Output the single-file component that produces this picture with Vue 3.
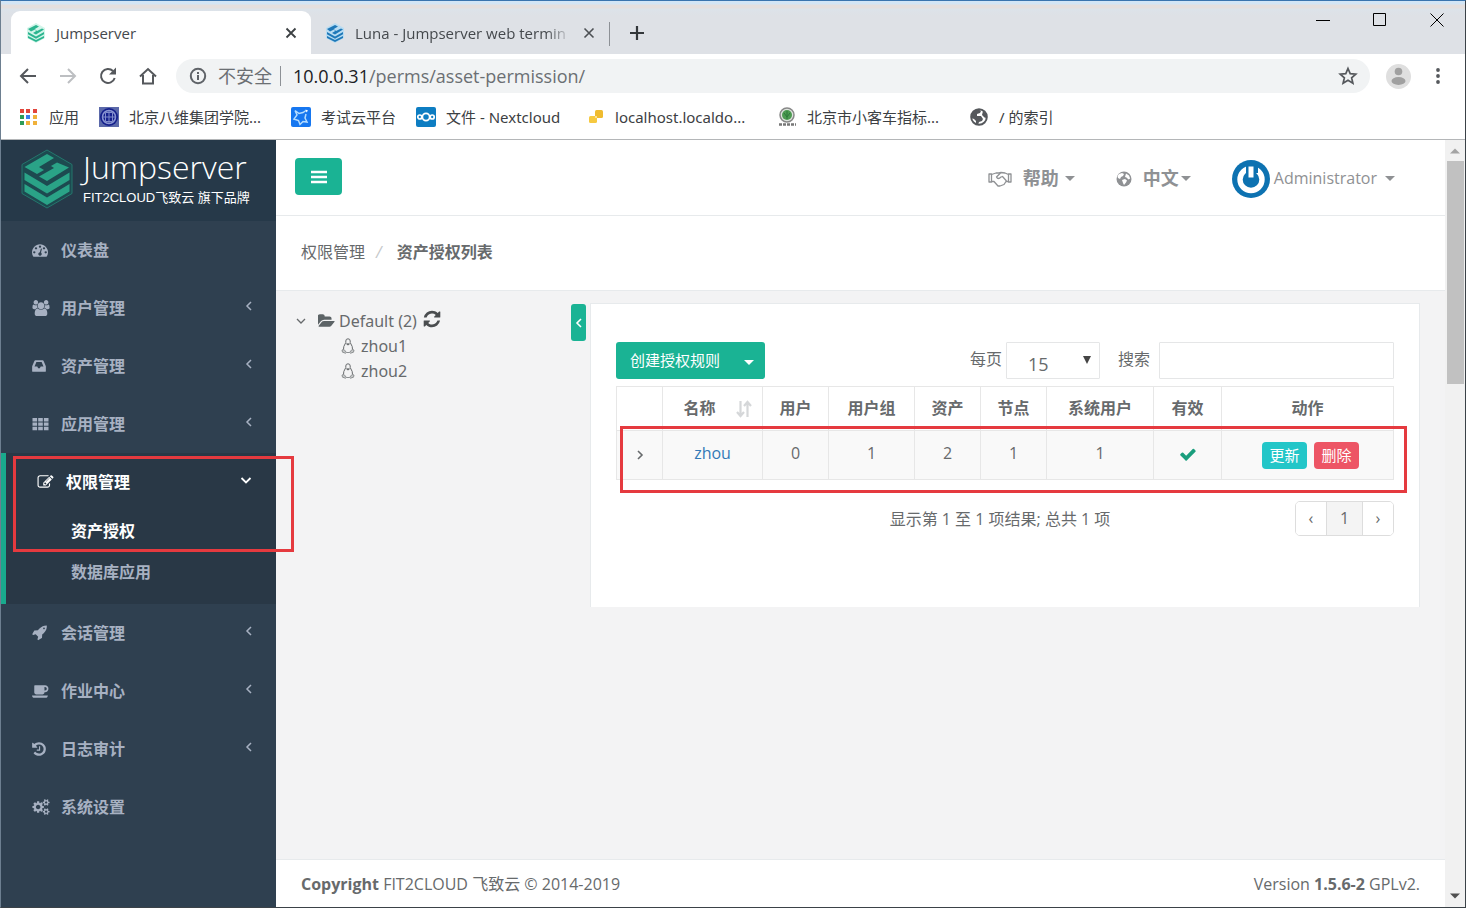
<script setup>
import { ref } from 'vue'

const cogTop = 'M1920 314v140q0 16-149 31-12 27-30 52 51 113 51 138 0 4-4 7-122 71-124 71-8 0-46-47t-52-68q-20 2-30 2t-30-2q-14 21-52 68t-46 47q-2 0-124-71-4-3-4-7 0-25 51-138-18-25-30-52-149-15-149-31v-140q0-16 149-31 13-29 30-52-51-113-51-138 0-4 4-7 4-2 35-20t59-34 30-16q8 0 46 46.5t52 67.5q20-2 30-2t30 2q51-71 92-112l6-2q4 0 124 70 4 3 4 7 0 25-51 138 17 23 30 52 149 15 149 31z'
const cogBottom = cogTop.replace('M1920 314', 'M1920 1338')

const icons = {
  dashboard: { box: '0 0 1792 1792', w: 16, d: 'M384 1152q0-53-37.5-90.5t-90.5-37.5-90.5 37.5-37.5 90.5 37.5 90.5 90.5 37.5 90.5-37.5 37.5-90.5zm192-448q0-53-37.5-90.5t-90.5-37.5-90.5 37.5-37.5 90.5 37.5 90.5 90.5 37.5 90.5-37.5 37.5-90.5zm428 481l101-382q6-26-7.5-48.5t-38.5-29.5-48 6.5-30 39.5l-101 382q-60 5-107 43.5t-63 98.5q-20 77 20 146t117 89 146-20 89-117q16-60-6-117t-72-91zm660-33q0-53-37.5-90.5t-90.5-37.5-90.5 37.5-37.5 90.5 37.5 90.5 90.5 37.5 90.5-37.5 37.5-90.5zm-640-640q0-53-37.5-90.5t-90.5-37.5-90.5 37.5-37.5 90.5 37.5 90.5 90.5 37.5 90.5-37.5 37.5-90.5zm448 192q0-53-37.5-90.5t-90.5-37.5-90.5 37.5-37.5 90.5 37.5 90.5 90.5 37.5 90.5-37.5 37.5-90.5zm320 448q0 261-141 483-19 29-54 29h-1402q-35 0-54-29-141-221-141-483 0-182 71-348t191-286 286-191 348-71 348 71 286 191 191 286 71 348z' },
  users: { box: '0 0 1920 1792', w: 18, d: 'M593 896q-162 5-265 128h-134q-82 0-138-40.5t-56-118.5q0-353 124-353 6 0 43.5 21t97.5 42.5 119 21.5q67 0 133-23-5 37-5 66 0 139 81 256zm1071 637q0 120-73 189.5t-194 69.5h-874q-121 0-194-69.5t-73-189.5q0-53 3.5-103.5t14-109 26.5-108.5 43-97.5 62-81 85.5-53.5 111.5-20q10 0 43 21.5t73 48 107 48 135 21.5 135-21.5 107-48 73-48 43-21.5q61 0 111.5 20t85.5 53.5 62 81 43 97.5 26.5 108.5 14 109 3.5 103.5zm-1024-1277q0 106-75 181t-181 75-181-75-75-181 75-181 181-75 181 75 75 181zm704 384q0 159-112.5 271.5t-271.5 112.5-271.5-112.5-112.5-271.5 112.5-271.5 271.5-112.5 271.5 112.5 112.5 271.5zm576 225q0 78-56 118.5t-138 40.5h-134q-103-123-265-128 81-117 81-256 0-29-5-66 66 23 133 23 59 0 119-21.5t97.5-42.5 43.5-21q124 0 124 353zm-128-609q0 106-75 181t-181 75-181-75-75-181 75-181 181-75 181 75 75 181z' },
  inbox: { box: '128 0 1536 1792', w: 14, d: 'M1088 960h316q-1-3-2.5-8.5t-2.5-7.5l-212-496h-582l-212 496q-1 3-2.5 8.5t-2.5 7.5h316l95 192h194zm576 30v482q0 26-19 45t-45 19h-1408q-26 0-45-19t-19-45v-482q0-62 25-123l238-552q10-25 36.5-42t52.5-17h832q26 0 52.5 17t36.5 42l238 552q25 61 25 123z' },
  grid: { box: '0 0 16 16', w: 17, d: 'M0 2h4.6v3.4H0zM5.7 2h4.6v3.4H5.7zM11.4 2H16v3.4h-4.6zM0 6.4h4.6v3.4H0zM5.7 6.4h4.6v3.4H5.7zM11.4 6.4H16v3.4h-4.6zM0 10.8h4.6v3.4H0zM5.7 10.8h4.6v3.4H5.7zM11.4 10.8H16v3.4h-4.6z' },
  edit: { box: '0 0 1792 1792', w: 17, d: 'M888 1184l116-116-152-152-116 116v56h96v96h56zm440-720q-16-16-33 1l-350 350q-17 17-1 33t33-1l350-350q17-17 1-33zm80 594v190q0 119-84.5 203.5t-203.5 84.5h-832q-119 0-203.5-84.5t-84.5-203.5v-832q0-119 84.5-203.5t203.5-84.5h832q63 0 117 25 15 7 18 23 3 17-9 29l-49 49q-14 14-32 8-23-6-45-6h-832q-66 0-113 47t-47 113v832q0 66 47 113t113 47h832q66 0 113-47t47-113v-126q0-13 9-22l64-64q15-15 35-7t20 29zm-96-738l288 288-672 672h-288v-288zm444 132l-92 92-288-288 92-92q28-28 68-28t68 28l152 152q28 28 28 68t-28 68z' },
  rocket: { box: '64 64 1664 1792', w: 16, d: 'M1440 448q0-40-28-68t-68-28-68 28-28 68 28 68 68 28 68-28 28-68zm224-288q0 249-75.5 430.5t-253.5 360.5q-81 80-195 176l-20 379q-2 16-16 26l-384 224q-7 4-16 4-12 0-23-9l-64-64q-13-14-8-32l85-276-281-281-276 85q-3 1-9 1-14 0-23-9l-64-64q-17-19-5-39l224-384q10-14 26-16l379-20q96-114 176-195 188-187 358-258t431-71q14 0 24 9.5t10 22.5z' },
  coffee: { box: '0 0 1920 1792', w: 17, d: 'M1664 640q0-80-56-136t-136-56h-64v384h64q80 0 136-56t56-136zm-1664 768h1792q0 106-75 181t-181 75h-1280q-106 0-181-75t-75-181zm1856-768q0 159-112.5 271.5t-271.5 112.5h-64v32q0 92-66 158t-158 66h-704q-92 0-158-66t-66-158v-736q0-26 19-45t45-19h1152q159 0 271.5 112.5t112.5 271.5z' },
  history: { box: '128 0 1536 1792', w: 14, d: 'M1664 896q0 156-61 298t-164 245-245 164-298 61q-172 0-327-72.5t-264-204.5q-7-10-6.5-22.5t8.5-20.5l137-138q10-9 25-9 16 2 23 12 73 95 179 147t225 52q104 0 198.5-40.5t163.5-109.5 109.5-163.5 40.5-198.5-40.5-198.5-109.5-163.5-163.5-109.5-198.5-40.5q-98 0-188 35.5t-160 101.5l137 138q31 30 14 69-17 40-59 40h-448q-26 0-45-19t-19-45v-448q0-42 40-59 39-17 69 14l130 129q107-101 244.5-156.5t284.5-55.5q156 0 298 61t245 164 164 245 61 298zm-640-288v448q0 14-9 23t-23 9h-320q-14 0-23-9t-9-23v-64q0-14 9-23t23-9h224v-352q0-14 9-23t23-9h64q14 0 23 9t9 23z' },
  cogs: { box: '0 0 1920 1792', w: 18, d: 'M896 896q0-106-75-181t-181-75-181 75-75 181 75 181 181 75 181-75 75-181zm768 512q0-52-38-90t-90-38-90 38-38 90q0 53 37.5 90.5t90.5 37.5 90.5-37.5 37.5-90.5zm0-1024q0-52-38-90t-90-38-90 38-38 90q0 53 37.5 90.5t90.5 37.5 90.5-37.5 37.5-90.5zm-384 421v185q0 10-7 19.5t-16 10.5l-155 24q-11 35-32 76 34 48 90 115 7 11 7 20 0 12-7 19-23 30-82.5 89.5t-78.5 59.5q-11 0-21-7l-115-90q-37 19-77 31-11 108-23 155-7 24-30 24h-186q-11 0-20-7.5t-10-17.5l-23-153q-34-10-75-31l-118 89q-7 7-20 7-11 0-21-8-144-133-144-160 0-9 7-19 10-14 41-53t47-61q-23-44-35-82l-152-24q-10-1-17-9.5t-7-19.5v-185q0-10 7-19.5t16-10.5l155-24q11-35 32-76-34-48-90-115-7-11-7-20 0-12 7-20 22-30 82-89t79-59q11 0 21 7l115 90q34-18 77-32 11-108 23-154 7-24 30-24h186q11 0 20 7.5t10 17.5l23 153q34 10 75 31l118-89q8-7 20-7 11 0 21 8 144 133 144 160 0 8-7 19-12 16-42 54t-45 60q23 48 34 82l152 23q10 2 17 10.5t7 19.5z' + cogTop + cogBottom },
}

const menuTop = [
  { label: '仪表盘', icon: 'dashboard', arrow: false },
  { label: '用户管理', icon: 'users', arrow: true },
  { label: '资产管理', icon: 'inbox', arrow: true },
  { label: '应用管理', icon: 'grid', arrow: true },
  { label: '权限管理', icon: 'edit', active: true, children: ['资产授权', '数据库应用'] },
  { label: '会话管理', icon: 'rocket', arrow: true },
  { label: '作业中心', icon: 'coffee', arrow: true },
  { label: '日志审计', icon: 'history', arrow: true },
  { label: '系统设置', icon: 'cogs', arrow: false },
]

const columns = ['用户', '用户组', '资产', '节点', '系统用户', '有效', '动作']
const rows = [{ name: 'zhou', counts: [0, 1, 2, 1, 1] }]
const address = ref('')
const search = ref('')
const pageSize = ref('15')
</script>

<template>
  <div class="window">
    <header class="tabstrip">
      <div class="tab active">
        <svg class="fav" viewBox="0 0 20 20">
          <path d="M10 0l9 5v10l-9 5-9-5V5z" fill="#d3f5ea" />
          <path d="M2 6l8-4 3 1.500-5 3 3 1.500 5-2.500 2 1-8 5-3-1.500 4-2.500-2-1-4 2z" fill="#2bb58f" />
          <path d="M2 9l8 4.500L18 9v2.200l-8 4.500-8-4.500zM2 13l8 4 8-4v2l-8 4-8-4z" fill="#2bb58f" />
        </svg>
        <span class="tab-title">Jumpserver</span>
        <button class="plain" aria-label="关闭标签页">
          <svg width="14" height="14" viewBox="0 0 14 14"><path d="M2.500 2.500l9 9M11.500 2.500l-9 9" stroke="#3c4043" stroke-width="1.800" /></svg>
        </button>
      </div>
      <div class="tab">
        <svg class="fav" viewBox="0 0 20 20">
          <path d="M10 0l9 5v10l-9 5-9-5V5z" fill="#b9dcf2" />
          <path d="M2 6l8-4 3 1.500-5 3 3 1.500 5-2.500 2 1-8 5-3-1.500 4-2.500-2-1-4 2z" fill="#1f78b8" />
          <path d="M2 9l8 4.500L18 9v2.200l-8 4.500-8-4.500zM2 13l8 4 8-4v2l-8 4-8-4z" fill="#1f78b8" />
        </svg>
        <span class="tab-title fade">Luna - Jumpserver web termin</span>
        <button class="plain" aria-label="关闭标签页">
          <svg width="14" height="14" viewBox="0 0 14 14"><path d="M2.500 2.500l9 9M11.500 2.500l-9 9" stroke="#4c5054" stroke-width="1.600" /></svg>
        </button>
      </div>
      <span class="tab-sep"></span>
      <button class="plain new-tab" aria-label="新标签页">
        <svg width="16" height="16" viewBox="0 0 16 16"><path d="M8 1v14M1 8h14" stroke="#33373a" stroke-width="2.200" /></svg>
      </button>
      <div class="win-controls">
        <button class="plain" aria-label="最小化"><svg width="14" height="14" viewBox="0 0 14 14"><path d="M0 7.500h14" stroke="#000" /></svg></button>
        <button class="plain" aria-label="最大化"><svg width="14" height="14" viewBox="0 0 14 14"><path d="M.5.5h12v12H.5z" stroke="#000" fill="none" /></svg></button>
        <button class="plain" aria-label="关闭"><svg width="14" height="14" viewBox="0 0 14 14"><path d="M.5.5l13 13M13.500.5l-13 13" stroke="#000" /></svg></button>
      </div>
    </header>

    <div class="toolbar">
      <button class="plain nav" aria-label="后退"><svg width="20" height="20" viewBox="0 0 20 20" fill="none" stroke="#55585c" stroke-width="2"><path d="M18 10H3M10 3l-7 7 7 7" /></svg></button>
      <button class="plain nav" aria-label="前进"><svg width="20" height="20" viewBox="0 0 20 20" fill="none" stroke="#bdbfc2" stroke-width="2"><path d="M2 10h15M10 3l7 7-7 7" /></svg></button>
      <button class="plain nav" aria-label="重新加载"><svg width="20" height="20" viewBox="0 0 20 20" fill="none" stroke="#55585c" stroke-width="2"><path d="M16.700 12A7 7 0 1 1 15 5" /><path d="M18 1.500v7h-7z" fill="#55585c" stroke="none" /></svg></button>
      <button class="plain nav" aria-label="主页"><svg width="20" height="20" viewBox="0 0 20 20" fill="none" stroke="#55585c" stroke-width="2"><path d="M2 10.500L10 3l8 7.500M5 9v8.500h10V9" /></svg></button>
      <div class="omnibox">
        <svg width="18" height="18" viewBox="0 0 18 18" fill="none" stroke="#5f6368" stroke-width="2"><circle cx="9" cy="9" r="7.200" /><path d="M9 8v5M9 5v2" /></svg>
        <span class="insecure">不安全</span>
        <span class="omni-sep"></span>
        <label class="url">
          <span class="host">10.0.0.31</span><span>/perms/asset-permission/</span>
          <input v-model="address" aria-label="地址栏" />
        </label>
        <button class="plain" aria-label="收藏"><svg width="20" height="20" viewBox="0 0 20 20"><path d="M10 2.500l2.200 5.100 5.600.5-4.200 3.700 1.300 5.400-4.900-2.900-4.900 2.900 1.300-5.400L2.200 8.100l5.600-.5z" fill="none" stroke="#55585c" stroke-width="1.700" /></svg></button>
      </div>
      <button class="plain profile" aria-label="用户"><svg width="25" height="25" viewBox="0 0 25 25"><circle cx="12.500" cy="12.500" r="12.500" fill="#dfdfdf" /><circle cx="12.500" cy="7.500" r="3.800" fill="#a0a0a0" /><ellipse cx="12.500" cy="17" rx="7" ry="3.900" fill="#a0a0a0" /></svg></button>
      <button class="plain" aria-label="菜单"><svg width="18" height="18" viewBox="0 0 18 18" fill="#55585c"><circle cx="9" cy="3" r="1.900" /><circle cx="9" cy="9" r="1.900" /><circle cx="9" cy="15" r="1.900" /></svg></button>
    </div>

    <nav class="bookmarks">
      <a href="#"><svg width="20" height="20" viewBox="0 0 20 20"><path d="M1 2h4v4H1zM7 2h4v4H7zM14 2h4v4h-4z" fill="#e2453b" /><path d="M1 8h4v4H1zM1 14h4v4H1z" fill="#2d9b57" /><path d="M7 8h4v4H7z" fill="#3b7ded" /><path d="M14 8h4v4h-4zM7 14h4v4H7zM14 14h4v4h-4z" fill="#f0b13a" /></svg><span>应用</span></a>
      <a href="#"><svg width="20" height="20" viewBox="0 0 20 20"><path d="M0 0h20v20H0z" fill="#5b69aa" /><circle cx="10" cy="10" r="9" fill="#15208c" /><circle cx="10" cy="10" r="6.500" fill="none" stroke="#8b96d2" stroke-width="1.500" /><path d="M6.500 5.500h7v9h-7zM10 4v12M3 10h14" fill="none" stroke="#7e8acb" /></svg><span class="wide">北京八维集团学院...</span></a>
      <a href="#"><svg width="20" height="20" viewBox="0 0 20 20"><rect width="20" height="20" rx="2" fill="#1677f0" /><path d="M4 3.500l4 3 4-1 3-2M15 7l-1 4 2 4-4-.5-3 3-1.500-4L3 12l3-4-2-4.500" fill="none" stroke="#b4dcff" stroke-width="1.500" /><path d="M14.500 2.500l2.500 1-1.500 2z" fill="#fff" /></svg><span>考试云平台</span></a>
      <a href="#"><svg width="20" height="20" viewBox="0 0 20 20"><rect width="20" height="20" rx="2" fill="#0d7dc2" /><g fill="none" stroke="#fff" stroke-width="1.700"><circle cx="10" cy="10" r="3.600" /><circle cx="3.800" cy="10" r="2" /><circle cx="16.200" cy="10" r="2" /></g></svg><span class="cloud">文件 - Nextcloud</span></a>
      <a href="#"><svg width="20" height="20" viewBox="0 0 20 20"><rect x="10" y="3" width="8" height="8" rx="1.500" fill="#efbb2f" /><rect x="4" y="9" width="8" height="7" rx="1.500" fill="#f6c940" /><path d="M10 9h2v2h-2z" fill="#fbe395" /></svg><span class="wide">localhost.localdo...</span></a>
      <a href="#"><svg width="20" height="20" viewBox="0 0 20 20"><circle cx="10" cy="8" r="7" fill="#dfe5df" stroke="#888" stroke-width="1.500" /><circle cx="10" cy="8" r="5" fill="#4d9b52" /><path d="M10 4v8M7 6l3 4 3-4" stroke="#2d7a3b" fill="none" /><path d="M2 17.500h17" stroke="#777" stroke-width="2.500" stroke-dasharray="3 1" /></svg><span class="wide">北京市小客车指标...</span></a>
      <a href="#"><svg width="20" height="20" viewBox="0 0 20 20"><circle cx="10" cy="10" r="7.800" fill="#fff" stroke="#55585c" stroke-width="2" /><path d="M3 7Q5 3 9 2l3 2-1 2-3 1v2h4l2 3-1 2-3 1-1 3-2-1v-3l-2-2-3-1zM14 4l3 3 .5 4-2-.5L13 8z" fill="#55585c" /></svg><span>/ 的索引</span></a>
    </nav>

    <div class="viewport">
      <aside class="sidebar">
        <div class="brand">
          <svg width="52" height="60" viewBox="0 0 52 60">
            <path d="M26 1l25 14.500v29L26 59 1 44.500v-29z" fill="#1d4a50" stroke="#24776d" />
            <path d="M3.500 18L26 5l7 4-15 9 5 3 13-7.500 12 5L26 32l-8-4.500 15-8.500-3-2-14 8z" fill="#2aa387" />
            <path d="M3.500 23.500L26 37l22.500-13.500v7.500L26 44.500 3.500 31zM3.500 35L26 48.500 48.500 35v7.500L26 56 3.500 42.500z" fill="#2aa387" />
          </svg>
          <div>
            <div class="brand-name">Jumpserver</div>
            <div class="brand-sub">FIT2CLOUD飞致云 旗下品牌</div>
          </div>
        </div>
        <ul class="menu">
          <li v-for="m in menuTop" :key="m.label" :class="{ active: m.active }">
            <a href="#" class="menu-link">
              <span class="menu-icon"><svg :width="icons[m.icon].w" height="16" :viewBox="icons[m.icon].box"><path :d="icons[m.icon].d" fill="currentColor" fill-rule="evenodd" /></svg></span>
              <span class="menu-label">{{ m.label }}</span>
              <svg v-if="m.arrow" class="chev" width="12" height="12" viewBox="0 0 12 12"><path d="M8 2L4 6l4 4" fill="none" stroke="currentColor" stroke-width="1.500" /></svg>
              <svg v-if="m.active" class="chev" width="12" height="12" viewBox="0 0 12 12"><path d="M1.500 4L6 8.500 10.500 4" fill="none" stroke="currentColor" stroke-width="1.800" /></svg>
            </a>
            <ul v-if="m.children" class="submenu">
              <li v-for="(c, i) in m.children" :key="c"><a href="#" :class="{ current: i === 0 }">{{ c }}</a></li>
            </ul>
            <span v-if="m.active" class="mark menu-mark"></span>
          </li>
        </ul>
      </aside>

      <main class="page">
        <header class="topbar">
          <button class="burger" aria-label="切换菜单"><svg width="16" height="14" viewBox="0 0 16 14"><path d="M0 2h16M0 7h16M0 12h16" stroke="#fff" stroke-width="2.600" /></svg></button>
          <div class="top-links">
            <a href="#" class="help">
              <svg width="24" height="18" viewBox="0 0 24 18" fill="none" stroke="currentColor" stroke-width="1.300" stroke-linejoin="round">
                <path d="M1 4h2.500v8H1zM20.500 4H23v8h-2.500z" /><path d="M3.500 4.500L8 3h3l2-.5 4 .5 3.500 1.500M3.500 11.500H6l4 4.500h2l4-1.500 2-3h2.500" /><path d="M12.500 3L8.500 7q1.500 3 4.500 0l1.500-.5 4 4.500" />
              </svg>
              <span>帮助</span><i class="caret"></i>
            </a>
            <a href="#" class="lang">
              <svg width="16" height="16" viewBox="0 0 16 16"><circle cx="8" cy="8" r="7.500" fill="currentColor" /><path d="M3 3l3-1 2 1-1 2-2 1-1 2-2-1-.5-2zM10 2.500l3 2 1.200 3-1.700 1-2-2-1.500-.5zM6 9l3-1 2 1.500-1 2-2 2.500-1-2z" fill="#fff" /></svg>
              <span>中文</span><i class="caret"></i>
            </a>
            <a href="#" class="user">
              <svg width="38" height="38" viewBox="0 0 38 38"><circle cx="19" cy="19" r="19" fill="#0d72b1" /><circle cx="19" cy="19.500" r="11" fill="none" stroke="#fff" stroke-width="5.400" /><path d="M14 4h12v9H14z" fill="#0d72b1" /><path d="M19 6.500v11" stroke="#fff" stroke-width="5" /></svg>
              <span>Administrator</span><i class="caret"></i>
            </a>
          </div>
        </header>

        <nav class="crumbs"><a href="#">权限管理</a><i>/</i><strong>资产授权列表</strong></nav>

        <section class="content">
          <div class="tree">
            <div class="node root">
              <svg class="twist" width="10" height="10" viewBox="0 0 10 10"><path d="M1 3l4 4 4-4" fill="none" stroke="#676a6c" stroke-width="1.300" /></svg>
              <svg width="17" height="16" viewBox="0 0 1815 1792"><path fill="#5c6366" d="M1815 952q0 31-31 66l-336 396q-43 51-120.500 86.500t-143.500 35.500h-1088q-34 0-60.500-13t-26.500-43q0-31 31-66l336-396q43-51 120.500-86.500t143.500-35.500h1088q34 0 60.500 13t26.500 43zm-343-344v160h-832q-94 0-197 47.500t-164 119.500l-337 396-5 6q0-4-.5-12.500t-.5-12.500v-960q0-92 66-158t158-66h320q92 0 158 66t66 158v32h544q92 0 158 66t66 158z" /></svg>
              <span>Default (2)</span>
              <button class="plain refresh" aria-label="刷新"><svg width="18" height="18" viewBox="64 64 1664 1664"><path fill="#4a4d4f" d="M1639 1056q0 5-1 7-64 268-268 434.500t-478 166.500q-146 0-282.500-55t-243.500-157l-129 129q-19 19-45 19t-45-19-19-45v-448q0-26 19-45t45-19h448q26 0 45 19t19 45-19 45l-137 137q71 66 161 102t187 36q134 0 250-65t186-179q11-17 53-117 8-23 30-23h192q13 0 22.500 9.500t9.500 22.500zm25-800v448q0 26-19 45t-45 19h-448q-26 0-45-19t-19-45 19-45l138-138q-148-137-349-137-134 0-250 65t-186 179q-11 17-53 117-8 23-30 23h-199q-13 0-22.500-9.500t-9.500-22.500v-7q65-268 270-434.500t480-166.500q146 0 284 55.500t245 156.500l130-129q19-19 45-19t45 19 19 45z" /></svg></button>
            </div>
            <div v-for="h in ['zhou1', 'zhou2']" :key="h" class="node leaf">
              <svg width="14" height="16" viewBox="0 0 14 16" fill="none" stroke="#676a6c"><path d="M4.800 4.500V3a2.200 2.200 0 0 1 4.400 0v1.500l2 4 .3 3M4.800 4.500l-2 4-.3 3" /><path d="M5.500 5.500L7 6.500l1.500-1" stroke-width="1.500" /><path d="M1 12l2-.5 2.500 3-1 .7-3-1zM13 12l-2-.5-2.500 3 1 .7 3-1zM5.500 14.500h3" stroke="#8d9092" fill="#c5c7c8" /></svg>
              <span>{{ h }}</span>
            </div>
          </div>

          <button class="collapse" aria-label="收起"><svg width="8" height="10" viewBox="0 0 8 10"><path d="M6 1L2 5l4 4" fill="none" stroke="#fff" stroke-width="1.600" /></svg></button>

          <div class="panel">
            <div class="controls">
              <button class="create"><span>创建授权规则</span><i class="caret"></i></button>
              <label class="size-label" for="size">每页</label>
              <div class="select-wrap">
                <select id="size" v-model="pageSize"><option>15</option></select>
                <svg width="8" height="8" viewBox="0 0 8 8"><path d="M0 0h8L4 8z" fill="#444" /></svg>
              </div>
              <label class="search-label" for="search">搜索</label>
              <input id="search" v-model="search" class="search" />
            </div>

            <div class="table-wrap">
              <table>
                <colgroup><col class="c46" /><col class="c100" /><col class="c66" /><col class="c86" /><col class="c66" /><col class="c66" /><col class="c107" /><col class="c68" /><col /></colgroup>
                <thead>
                  <tr>
                    <th></th>
                    <th class="sortable"><span>名称</span><svg width="16" height="18" viewBox="0 0 16 18"><path d="M4.500 1v14M1 12l3.500 4L8 12M11.500 17V3M8 6l3.500-4L15 6" fill="none" stroke="#d5d7d9" stroke-width="2.200" /></svg></th>
                    <th v-for="c in columns" :key="c">{{ c }}</th>
                  </tr>
                </thead>
                <tbody>
                  <tr v-for="r in rows" :key="r.name">
                    <td><svg width="8" height="10" viewBox="0 0 8 10"><path d="M2 1l4 4-4 4" fill="none" stroke="#676a6c" stroke-width="1.600" /></svg></td>
                    <td><a href="#">{{ r.name }}</a></td>
                    <td v-for="(n, i) in r.counts" :key="i">{{ n }}</td>
                    <td><svg width="16" height="14" viewBox="100 300 1600 1300"><path fill="#1a9e7d" d="M1671 566q0 40-28 68l-724 724-136 136q-28 28-68 28t-68-28l-136-136-362-362q-28-28-28-68t28-68l136-136q28-28 68-28t68 28l294 295 656-657q28-28 68-28t68 28l136 136q28 28 28 68z" /></svg></td>
                    <td class="actions"><button class="mini info">更新</button><button class="mini danger">删除</button></td>
                  </tr>
                </tbody>
              </table>
              <span class="mark row-mark"></span>
            </div>

            <div class="foot-row">
              <p>显示第 1 至 1 项结果; 总共 1 项</p>
              <div class="pager"><button>‹</button><button class="on">1</button><button>›</button></div>
            </div>
          </div>
        </section>

        <footer class="footer">
          <span><strong>Copyright</strong> FIT2CLOUD 飞致云 © 2014-2019</span>
          <span>Version <strong>1.5.6-2</strong> GPLv2.</span>
        </footer>
      </main>

      <div class="scrollbar">
        <svg width="10" height="6" viewBox="0 0 10 6"><path d="M0 5.500h10L5 .5z" fill="#a3a3a3" /></svg>
        <span class="thumb"></span>
        <svg width="10" height="6" viewBox="0 0 10 6"><path d="M0 .5h10L5 5.500z" fill="#505050" /></svg>
      </div>
    </div>
  </div>
</template>

<style>
body {
  margin: 0;
}
</style>

<style scoped>
* {
  box-sizing: border-box;
}
.window {
  display: flex;
  flex-direction: column;
  min-height: 100vh;
  border: 1px solid #3b4248;
  border-top-color: #3a74ae;
  border-left-color: #6d7f90;
  background: #fff;
  color: #676a6c;
  font: 16px/24px "Open Sans", "Noto Sans CJK SC", sans-serif;
}
a {
  color: inherit;
  text-decoration: none;
}
ul,
p {
  margin: 0;
  padding: 0;
  list-style: none;
}
button,
input,
select {
  font: inherit;
  color: inherit;
}
svg {
  flex: none;
  display: block;
}
.plain {
  display: flex;
  padding: 0;
  border: 0;
  background: none;
}

/* browser frame */
.tabstrip {
  display: flex;
  height: 53px;
  padding: 10px 0 0 10px;
  background: linear-gradient(#d3e5f5 0 3px, #e4dfde 4px 7px, #dce3ea 8px, #dee1e6 14px);
}
.tab {
  display: flex;
  align-items: center;
  width: 298px;
  padding: 0 13px 0 14px;
  color: #45494d;
  font-size: 15px;
}
.tab.active {
  width: 300px;
  padding-left: 15px;
  border-radius: 9px 9px 0 0;
  background: #fff;
}
.fav {
  width: 20px;
  height: 20px;
  margin-right: 10px;
}
.tab-title {
  flex: 1;
  white-space: nowrap;
}
.fade {
  margin-right: 10px;
  mask-image: linear-gradient(to right, #000 88%, transparent);
}
.tab-sep {
  width: 1px;
  height: 24px;
  margin-top: 11px;
  background: #8d9196;
}
.new-tab {
  margin: 14px 0 0 19px;
  height: 16px;
}
.win-controls {
  display: flex;
  gap: 43px;
  margin: 2px 21px 0 auto;
}
.win-controls .plain {
  height: 14px;
}
.toolbar {
  display: flex;
  align-items: center;
  height: 44px;
  padding: 0 18px 0 17px;
}
.nav {
  margin-right: 20px;
}
.omnibox {
  flex: 1;
  display: flex;
  align-items: center;
  height: 34px;
  padding: 0 12px 0 13px;
  margin: 0 16px 0 -2px;
  border-radius: 17px;
  background: #f1f3f4;
  color: #6b6f73;
  font-size: 18px;
}
.insecure {
  margin-left: 11px;
}
.omni-sep {
  width: 1px;
  height: 20px;
  margin: 0 12px 0 8px;
  background: #8d9196;
}
.url {
  flex: 1;
  display: flex;
}
.url input {
  flex: 1;
  min-width: 0;
  padding: 0;
  border: 0;
  background: none;
  outline: none;
}
.host {
  color: #202124;
}
.profile {
  margin-right: 18px;
}
.bookmarks {
  display: flex;
  align-items: center;
  gap: 20px;
  height: 42px;
  padding: 0 18px 4px;
  border-bottom: 1px solid #b4b6b8;
  color: #3c4043;
  font-family: "Noto Sans", "Noto Sans CJK SC", sans-serif;
  font-size: 15px;
}
.bookmarks a {
  display: flex;
  align-items: center;
  gap: 10px;
  white-space: nowrap;
}
.wide {
  width: 142px;
}
.cloud {
  width: 119px;
}

/* page */
.viewport {
  flex: 1;
  display: flex;
}
.sidebar {
  width: 275px;
  background: #2f4050;
  color: #a7b1c2;
}
.brand {
  display: flex;
  gap: 10px;
  height: 81px;
  padding: 9px 0 0 20px;
  background: #263949;
  color: #fff;
}
.brand-name {
  font-size: 32px;
  font-weight: 300;
  line-height: 36px;
}
.brand-sub {
  font: 13px/26px "Liberation Sans", "Noto Sans CJK SC", sans-serif;
  white-space: nowrap;
}
.menu {
  font-weight: 600;
}
.menu > li {
  position: relative;
}
.menu-link {
  display: flex;
  align-items: center;
  height: 58px;
  padding: 0 21px 0 31px;
}
.menu-icon {
  width: 29px;
}
.menu-label {
  flex: 1;
}
.chev {
  margin-bottom: 4px;
}
.active .menu-link {
  padding: 0 24px 0 31px;
}
.menu > .active {
  padding-bottom: 11px;
  border-left: 5px solid #19aa8d;
  background: #293846;
}
.active .menu-link,
.current {
  color: #fff;
}
.submenu a {
  display: block;
  padding-left: 65px;
  line-height: 41px;
}
.mark {
  position: absolute;
  border: 3px solid #e53a3f;
  pointer-events: none;
}
.menu-mark {
  z-index: 1;
  top: 3px;
  left: 7px;
  width: 281px;
  height: 96px;
}
.page {
  flex: 1;
  display: flex;
  flex-direction: column;
  min-width: 0;
  background: #f3f3f4;
}
.topbar {
  display: flex;
  align-items: center;
  justify-content: space-between;
  height: 76px;
  padding: 0 50px 2px 19px;
  border-bottom: 1px solid #e7eaec;
  background: #fff;
}
.burger {
  display: grid;
  place-items: center;
  width: 47px;
  height: 37px;
  border: 0;
  border-radius: 4px;
  background: #1ab394;
}
.top-links,
.top-links a {
  display: flex;
  align-items: center;
}
.top-links {
  gap: 41px;
  padding-top: 4px;
  color: #8f9194;
}
.help,
.lang {
  font-size: 18px;
  font-weight: 700;
}
.top-links span {
  padding-bottom: 2px;
}
.help span {
  margin: 0 6px 0 11px;
}
.lang span {
  margin: 0 2px 0 11px;
}
.user span {
  margin: 0 8px 0 4px;
}
.caret {
  border: 5px solid transparent;
  border-top-color: currentColor;
  border-bottom: 0;
}
.crumbs {
  display: flex;
  align-items: center;
  height: 75px;
  padding: 0 25px 2px;
  border-bottom: 1px solid #e7eaec;
  background: #fff;
}
.crumbs i {
  margin: 0 15px 0 11px;
  color: #c5c8ca;
}
.content {
  flex: 1;
  display: flex;
  align-items: flex-start;
  padding: 12px 25px 0 19px;
}
.tree {
  flex: none;
  width: 276px;
  padding: 5px 0 0 1px;
  font-family: "Noto Sans", sans-serif;
}
.node {
  display: flex;
  align-items: center;
  height: 25px;
}
.root svg + svg {
  margin: 0 4px 0 12px;
}
.refresh {
  margin: 0 0 4px 6px;
}
.leaf {
  padding-left: 45px;
}
.leaf span {
  margin-left: 6px;
}
.collapse {
  display: grid;
  place-items: center;
  flex: none;
  width: 15px;
  height: 37px;
  margin-top: 1px;
  margin-right: 4px;
  padding: 0;
  border: 0;
  border-radius: 3px;
  background: #1ab394;
}
.panel {
  flex: 1;
  min-height: 304px;
  min-width: 0;
  padding: 38px 25px 60px;
  border: 1px solid #e7eaec;
  border-bottom: 0;
  background: #fff;
}
.controls {
  display: flex;
  margin-bottom: 7px;
}
.create {
  display: flex;
  align-items: center;
  gap: 24px;
  height: 37px;
  padding: 0 11px 2px 14px;
  border: 0;
  border-radius: 3px;
  background: #1ab394;
  color: #fff;
  font-size: 15px;
}
.create .caret {
  margin-top: 6px;
}
.size-label {
  margin: 5px 4px 0 auto;
}
.select-wrap {
  position: relative;
}
.select-wrap svg {
  position: absolute;
  top: 14px;
  right: 9px;
}
select {
  appearance: none;
  width: 94px;
  height: 37px;
  padding: 6px 20px 0 21px;
  border: 1px solid #e5e6e7;
  border-radius: 1px;
  background: #fff;
  font-size: 18px;
}
.search-label {
  margin: 5px 9px 0 18px;
}
.search {
  width: 235px;
  height: 37px;
  padding: 0 8px;
  border: 1px solid #e5e6e7;
  border-radius: 1px;
}
.table-wrap {
  position: relative;
}
table {
  width: 100%;
  table-layout: fixed;
  border-collapse: collapse;
  text-align: center;
}
.c46 { width: 46px; }
.c66 { width: 66px; }
.c68 { width: 68px; }
.c86 { width: 86px; }
.c100 { width: 100px; }
.c107 { width: 107px; }
th,
td {
  padding: 0;
  border: 1px solid #e7e7e7;
}
th {
  height: 44px;
  padding-bottom: 2px;
  font-weight: 700;
}
.sortable span {
  margin: 0 20px 0 10px;
}
.sortable svg,
td svg {
  display: inline-block;
  vertical-align: middle;
}
td {
  height: 49px;
  padding-bottom: 4px;
  background: #f9f9f9;
}
td a {
  color: #337ab7;
}
.actions {
  padding: 1px 0 0 6px;
}
.mini {
  width: 45px;
  height: 27px;
  padding: 0;
  border: 0;
  border-radius: 4px;
  color: #fff;
  font-size: 15px;
  line-height: 27px;
}
.info {
  margin-right: 7px;
  background: #23c6c8;
}
.danger {
  background: #ed5565;
}
.row-mark {
  top: 40px;
  left: 4px;
  right: -13px;
  height: 67px;
}
.foot-row {
  display: grid;
  grid-template-columns: 1fr auto 1fr;
  margin-top: 21px;
}
.foot-row p {
  grid-column: 2;
  padding: 6px 10px 0 0;
}
.pager {
  display: flex;
  justify-self: end;
  border: 1px solid #ddd;
  border-radius: 5px;
  overflow: hidden;
}
.pager button {
  width: 30px;
  height: 33px;
  padding: 0 0 2px;
  border: 0;
  background: #fff;
}
.pager .on {
  width: 37px;
  border: solid #ddd;
  border-width: 0 1px;
  background: #f4f4f4;
}
.footer {
  display: flex;
  justify-content: space-between;
  padding: 12px 25px 11px;
  border-top: 1px solid #e7eaec;
  background: #fff;
}
.scrollbar {
  display: flex;
  flex-direction: column;
  align-items: center;
  width: 20px;
  padding: 8px 0;
  background: #f1f1f1;
}
.thumb {
  width: 17px;
  height: 223px;
  margin: 7px 0 auto;
  background: #c1c1c1;
}
</style>
